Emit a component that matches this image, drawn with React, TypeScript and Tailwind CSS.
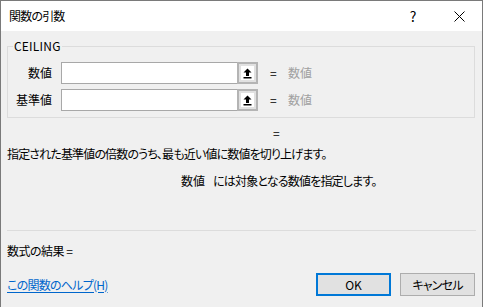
import React from "react";

const font = "font-['Noto_Sans_CJK_JP','Noto_Sans',sans-serif] [font-feature-settings:'palt']";

function RefButton() {
  return (
    <div className="w-[21px] h-[22px] bg-[#e1e1e1] border-2 border-[#b4b4b4] flex items-center justify-center">
      <div className="w-[13px] h-[14px] bg-white flex items-center justify-center">
        <svg width="9" height="11" viewBox="0 0 9 11">
          <path d="M4.5 0.5 L8.5 4.5 L6 4.5 L6 8 L3 8 L3 4.5 L0.5 4.5 Z" fill="#000" />
          <rect x="0.5" y="9" width="8" height="1.5" fill="#000" />
        </svg>
      </div>
    </div>
  );
}

function ArgRow({ label }: { label: string }) {
  return (
    <div className="flex items-center h-[22px]">
      <div className="w-[44px] text-right text-[12px] leading-none text-black">{label}</div>
      <div className="ml-[9px] flex">
        <div className="w-[176px] h-[22px] bg-white border border-[#a8a8a8] border-r-0" />
        <RefButton />
      </div>
      <div className="ml-[12px] w-[10px] text-[12px] leading-none text-black">=</div>
      <div className="ml-[8px] text-[12px] leading-none text-[#a0a0a0]">数値</div>
    </div>
  );
}

export default function App() {
  return (
    <div className={`w-[483px] h-[307px] overflow-hidden bg-[#f0f0f0] border-l border-t border-r border-[#7a7a7a] flex flex-col ${font}`}>
      <div className="h-[30px] bg-white flex items-center shrink-0">
        <div className="pl-[8px] text-[12px] text-black flex-1 tracking-[-0.8px]">関数の引数</div>
        <div className="w-[46px] h-[30px] flex items-center justify-center text-[14px] text-black">?</div>
        <div className="w-[46px] h-[30px] flex items-center justify-center">
          <svg width="11" height="11" viewBox="0 0 11 11">
            <path d="M0.5 0.5 L10.5 10.5 M10.5 0.5 L0.5 10.5" stroke="#000" strokeWidth="1" />
          </svg>
        </div>
      </div>
      <div className="flex flex-col pl-[6px] pr-[7px]">
        <div className="relative mt-[15px] w-[468px] h-[72px] border border-[#dcdcdc] pt-[15px]">
          <div className="absolute left-[5px] top-[-8px] bg-[#f0f0f0] px-px text-[12px] leading-[14px] text-black tracking-[0.2px]">CEILING</div>
          <div className="flex flex-col gap-[5px]">
            <ArgRow label="数値" />
            <ArgRow label="基準値" />
          </div>
        </div>
        <div className="mt-[7px] h-[16px] leading-[16px] text-[12px] text-black pl-[266px]">=</div>
        <div className="mt-[5px] h-[16px] leading-[16px] text-[12px] text-black tracking-[-0.85px]">
          指定された基準値の倍数のうち、最も近い値に数値を切り上げます。
        </div>
        <div className="mt-[11px] h-[16px] leading-[16px] text-[12px] text-black pl-[174px] flex">
          <span>数値</span>
          <span className="ml-[8px] tracking-[-0.8px]">には対象となる数値を指定します。</span>
        </div>
        <div className="mt-[41px] h-px w-[469px] bg-[#dcdcdc]" />
        <div className="mt-[12px] h-[16px] leading-[16px] text-[12px] text-black tracking-[-0.5px]">数式の結果 =</div>
        <div className="mt-[14px] flex items-center">
          <a className="text-[12px] text-[#0066cc] underline underline-offset-2 flex-1 tracking-[-0.75px]">この関数のヘルプ(H)</a>
          <div className="w-[75px] h-[23px] bg-[#e1e1e1] border-2 border-[#0078d7] flex items-center justify-center text-[12px] text-black">OK</div>
          <div className="ml-[9px] w-[75px] h-[23px] bg-[#e1e1e1] border border-[#adadad] flex items-center justify-center text-[12px] text-black tracking-[-0.8px]">キャンセル</div>
        </div>
      </div>
    </div>
  );
}
